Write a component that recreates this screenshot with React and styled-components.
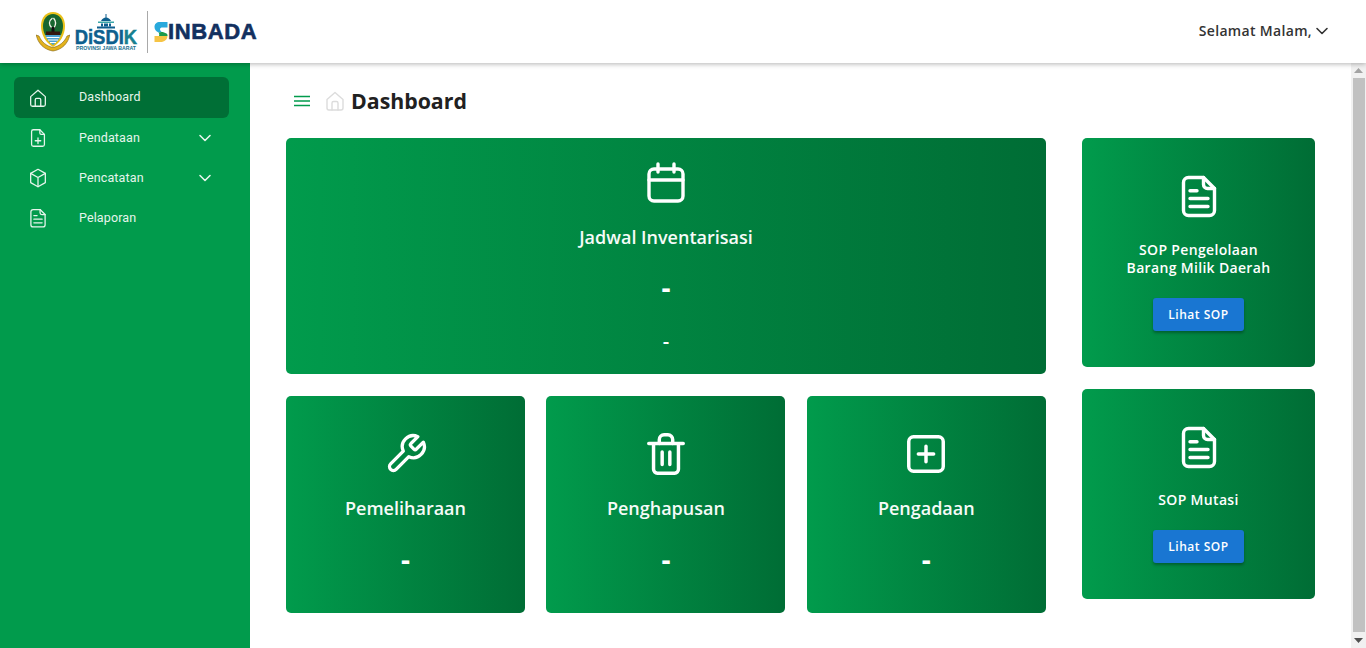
import React from "react";
import styled, { createGlobalStyle } from "styled-components";

const Global = createGlobalStyle`
  html, body { margin: 0; padding: 0; height: 100%; overflow: hidden; background: #fff; }
  #root { height: 100%; }
  * { box-sizing: border-box; }
`;

const Page = styled.div`
  display: flex; flex-direction: column; height: 648px; width: 100%;
  font-family: "Open Sans", sans-serif;
`;
const Header = styled.header`
  height: 63px; flex: none; background: #fff; display: flex; align-items: center;
  justify-content: space-between; padding: 0 36px 0 36px; position: relative; z-index: 2;
  box-shadow: 0 1px 5px rgba(0,0,0,.3);
`;
const Brand = styled.div`display: flex; align-items: center; height: 63px;`;
const Disdik = styled.div`
  display: flex; flex-direction: column; align-items: center; margin-left: 5px; width: 62px; padding-top: 2px;
`;
const DisdikName = styled.span`
  font: 700 20px/17px "Liberation Sans", sans-serif; color: #0e5f8e; white-space: nowrap;
  transform: scaleX(.92); -webkit-text-stroke: .5px #0e5f8e;
`;
const DisdikTail = styled.span`color: #17808f; -webkit-text-stroke: .5px #17808f;`;
const DisdikSub = styled.span`
  font: 700 5.2px/5px "Liberation Sans", sans-serif; color: #17708f; white-space: nowrap;
`;
const Divider = styled.div`width: 1px; height: 42px; background: #a9a9a9; margin: 0 6px 0 10px;`;
const SinbadaName = styled.span`
  font: 700 22px/24px "Liberation Sans", sans-serif; color: #12305f; letter-spacing: .6px;
  -webkit-text-stroke: .6px #12305f;
`;
const Greeting = styled.div`
  display: flex; align-items: center; gap: 2px; font-size: 14px; font-weight: 600; color: #333;
  letter-spacing: .33px; padding-bottom: 2px;
`;
const Body = styled.div`display: flex; flex: 1; min-height: 0;`;
const Sidebar = styled.nav`
  width: 250px; flex: none; background: #019b4c; padding: 14px 21px 0 14px; display: flex; flex-direction: column;
  font-family: Roboto, sans-serif;
`;
const NavItem = styled.div`
  height: ${p => (p.$active ? "41px" : "40px")}; border-radius: 6px; display: flex; align-items: center;
  padding-left: 13px; background: ${p => (p.$active ? "#006f36" : "transparent")}; color: #e6f5ec;
  font-size: 12.5px; letter-spacing: .13px;
`;
const NavLabel = styled.span`margin-left: 30px; flex: 1; padding-bottom: 2px;`;
const NavChevron = styled.span`display: flex; margin-right: 16px;`;
const Main = styled.main`flex: 1; min-width: 0; overflow: hidden; background: #fff;`;
const Content = styled.div`padding: 22px 36px 0;`;
const TitleRow = styled.div`display: flex; align-items: center; height: 32px; margin-bottom: 21px; padding-left: 8px;`;
const Title = styled.h1`margin: 0 0 0 4px; font-size: 21.3px; line-height: 32px; font-weight: 700; color: #212121;`;
const HomeWrap = styled.span`display: flex; margin-left: 13px;`;
const Hamburger = styled.span`display: flex;`;
const Grid = styled.div`display: grid; grid-template-columns: 760px 233px; column-gap: 36px; align-items: start;`;
const Column = styled.div`display: flex; flex-direction: column; gap: 22px;`;
const Row = styled.div`display: grid; grid-template-columns: 239px 239px 239px; column-gap: 21.4px;`;
const Card = styled.section`
  height: ${p => p.$h}px; border-radius: 5px; color: #fff; display: flex; flex-direction: column; align-items: center;
  background: linear-gradient(90deg, #019b4c 0%, #006d35 100%); padding-top: ${p => p.$pt}px;
`;
const IconSlot = styled.div`width: 48px; height: 48px; display: flex; align-items: center; justify-content: center; flex: none;`;
const CardTitle = styled.div`font-size: 18px; line-height: 26px; font-weight: 600; margin-top: ${p => p.$mt}px; color: #f6fbf8;`;
const BigDash = styled.div`font-size: 28px; line-height: 32px; font-weight: 700; margin-top: ${p => p.$mt}px;`;
const SmallDash = styled.div`font-size: 20px; line-height: 24px; font-weight: 600; margin-top: 26px;`;
const SopTitle = styled.div`
  font-size: 14px; line-height: 18px; font-weight: 600; text-align: center; margin-top: ${p => p.$mt}px; letter-spacing: .33px;
`;
const SopButton = styled.button`
  width: 91px; height: 33px; border: 0; border-radius: 3px; background: #1976d2; color: #fff; font-family: "Open Sans", sans-serif;
  font-size: 12px; font-weight: 600; letter-spacing: .52px; margin-top: ${p => p.$mt}px;
  box-shadow: 0 2px 3px rgba(0,0,0,.3);
`;
const Scrollbar = styled.div`
  width: 15px; flex: none; background: #f1f1f1; display: flex; flex-direction: column; align-items: center;
`;
const ScrollArrow = styled.div`
  height: 15px; flex: none; display: flex; align-items: center; justify-content: center;
`;
const ScrollTrack = styled.div`flex: 1; width: 100%; padding: 0 1px 1px 2px; display: flex;`;
const ScrollThumb = styled.div`flex: 1; background: #c1c1c1;`;

const Icon = ({ size = 24, sw = 2, color = "currentColor", children }) => (
  <svg width={size} height={size} viewBox="0 0 24 24" fill="none" stroke={color} strokeWidth={sw} strokeLinecap="round" strokeLinejoin="round">{children}</svg>
);
const HomeIcon = p => <Icon {...p}><path d="M4 10.5 12 3.5l8 7V19a2 2 0 0 1-2 2H6a2 2 0 0 1-2-2z" /><path d="M9 21v-7a1.500 1.500 0 0 1 1.500-1.500h3A1.500 1.500 0 0 1 15 14v7" /></Icon>;
const FilePlusIcon = p => <Icon {...p}><path d="M14 3H7a2 2 0 0 0-2 2v14a2 2 0 0 0 2 2h10a2 2 0 0 0 2-2V8z" /><path d="M14 3v3.500a1.500 1.500 0 0 0 1.500 1.500H19" /><path d="M12 12v6M9 15h6" /></Icon>;
const BoxIcon = p => <Icon {...p}><path d="M12 2.500 20 7v10l-8 4.500L4 17V7z" /><path d="M4 7l8 4.500L20 7M12 11.500v10" /></Icon>;
const FileTextIcon = p => <Icon {...p}><path d="M14.250 2.750H6.750a2.500 2.500 0 0 0-2.500 2.500v14a2.500 2.500 0 0 0 2.500 2.500h10.500a2.500 2.500 0 0 0 2.500-2.500V8.250z" /><path d="M14.250 2.750v3.500a2 2 0 0 0 2 2h3.500" /><path d="M7.500 9.350h3.500M7.500 13.250h9M7.500 17.250h9" /></Icon>;
const CalendarIcon = p => <Icon {...p}><rect x="3.500" y="5" width="17" height="16" rx="2.500" /><path d="M3.500 10.500h17M8 2.500v4M16 2.500v4" /></Icon>;
const WrenchIcon = p => <Icon {...p}><path d="M14.700 6.300a1 1 0 0 0 0 1.400l1.600 1.600a1 1 0 0 0 1.400 0l3.770-3.770a6 6 0 0 1-7.940 7.940l-6.910 6.910a2.120 2.120 0 0 1-3-3l6.910-6.910a6 6 0 0 1 7.940-7.940l-3.760 3.760z" /></Icon>;
const TrashIcon = p => <Icon {...p}><path d="M3 6.500h18M5.500 6.500V20a2 2 0 0 0 2 2h9a2 2 0 0 0 2-2V6.500" /><path d="M8.500 6.500V4.500a2.500 2.500 0 0 1 2.500-2.500h2a2.500 2.500 0 0 1 2.500 2.500v2M10 11v6.500M14 11v6.500" /></Icon>;
const SquarePlusIcon = p => <Icon {...p}><rect x="3" y="3" width="18" height="18" rx="2.500" /><path d="M12 8v8M8 12h8" /></Icon>;
const Chevron = ({ size = 16, color = "currentColor", sw = 1.6 }) => (
  <svg width={size} height={size} viewBox="0 0 16 16" fill="none" stroke={color} strokeWidth={sw} strokeLinecap="round" strokeLinejoin="round"><path d="M3 5.500 8 10.500l5-5" /></svg>
);

const Crest = () => (
  <svg width="34" height="40" viewBox="0 0 34 40">
    <path d="M17 0c7 0 12 5.500 12 14 0 9-5 17-12 21C10 31 5 23 5 14 5 5.500 10 0 17 0z" fill="#e9c11a" />
    <path d="M17 2c6 0 10 5 10 12 0 3-.7 6-2 9H9c-1.300-3-2-6-2-9C7 7 11 2 17 2z" fill="#17662f" />
    <path d="M16.500 6c-4 3-4 7-.5 10M17.500 6c2.500 3 3 6 .5 10" stroke="#f4f4e8" strokeWidth="1.300" fill="none" />
    <rect x="15.500" y="15" width="3" height="5" fill="#111" />
    <rect x="10" y="19.500" width="14" height="3.500" fill="#34170e" />
    <path d="M9 23h16c-1.500 4-4 7-8 10-4-3-6.500-6-8-10z" fill="#4da0d0" />
    <path d="M10.500 25.500h13M12 28h10M14 30.500h6" stroke="#fff" strokeWidth="1" />
    <path d="M0 23c1 2 1.500 5 3 7 3 5 8 8 14 9 6-1 11-4 14-9 1.500-2 2-5 3-7l-3 1c-2.500 6-7.500 10-14 11.500C10.500 34 5.500 30 3 24z" fill="#e3b21c" stroke="#7d5f0e" strokeWidth=".6" />
  </svg>
);
const Tower = () => (
  <svg width="24" height="15" viewBox="0 0 24 15">
    <path d="M12 0v4" stroke="#0e5f8e" strokeWidth="1" />
    <path d="M7 7c1-2 3-3.500 5-3.500S16 5 17 7z" fill="#0e5f8e" />
    <rect x="4" y="7.500" width="16" height="1.500" fill="#3aa6a8" />
    <path d="M7 9.500h2v3H7zM10 9.500h4v3h-4zM15 9.500h2v3h-2z" fill="#0e5f8e" />
    <rect x="3" y="12.500" width="18" height="2" fill="#0e5f8e" />
  </svg>
);
const SinbadaMark = () => (
  <svg width="14" height="22" viewBox="0 0 14 22">
    <path d="M13.500 1H6C2.500 1 .5 3 .5 6c0 2.500 1.500 4.500 4 5.500 1.500-.5 3-.5 4 0-1.500-1-2.500-2-2.500-3.200C6 7 7 6.500 8.500 6.500h5z" fill="#29a9dc" />
    <path d="M4.500 11.500c3-1 5.500-.5 8 1 1 .8 1.200 1.500 1 2.500H5c.5-1.500.2-2.700-.5-3.500z" fill="#1c9a4b" />
    <path d="M.5 15h13c-.2 3.500-3 6-7 6H.5z" fill="#f6c445" />
  </svg>
);

const menu = [
  { label: "Dashboard", icon: HomeIcon, active: true },
  { label: "Pendataan", icon: FilePlusIcon, more: true },
  { label: "Pencatatan", icon: BoxIcon, more: true },
  { label: "Pelaporan", icon: FileTextIcon },
];
const small = [
  { title: "Pemeliharaan", icon: WrenchIcon, size: 44 },
  { title: "Penghapusan", icon: TrashIcon, size: 46 },
  { title: "Pengadaan", icon: SquarePlusIcon, size: 46 },
];

export default function App() {
  return (
    <Page>
      <Global />
      <Header>
        <Brand>
          <Crest />
          <Disdik>
            <Tower />
            <DisdikName>DiSDI<DisdikTail>K</DisdikTail></DisdikName>
            <DisdikSub>PROVINSI JAWA BARAT</DisdikSub>
          </Disdik>
          <Divider />
          <SinbadaMark />
          <SinbadaName>INBADA</SinbadaName>
        </Brand>
        <Greeting>Selamat Malam,<Chevron size={16} color="#333" /></Greeting>
      </Header>
      <Body>
        <Sidebar>
          {menu.map(m => (
            <NavItem key={m.label} $active={m.active}>
              <m.icon size={22} sw={1.4} />
              <NavLabel>{m.label}</NavLabel>
              {m.more && <NavChevron><Chevron size={16} /></NavChevron>}
            </NavItem>
          ))}
        </Sidebar>
        <Main>
          <Content>
            <TitleRow>
              <Hamburger>
                <svg width="16" height="12" viewBox="0 0 16 12" stroke="#019b4c" strokeWidth="1.600"><path d="M0 1.500h16M0 6h16M0 10.500h16" /></svg>
              </Hamburger>
              <HomeWrap><HomeIcon size={24} sw={1.4} color="#dcdcdc" /></HomeWrap>
              <Title>Dashboard</Title>
            </TitleRow>
            <Grid>
              <Column>
                <Card $h={236} $pt={21}>
                  <IconSlot><CalendarIcon size={48} sw={1.7} /></IconSlot>
                  <CardTitle $mt={17}>Jadwal Inventarisasi</CardTitle>
                  <BigDash $mt={21}>-</BigDash>
                  <SmallDash>-</SmallDash>
                </Card>
                <Row>
                  {small.map(s => (
                    <Card key={s.title} $h={217} $pt={34}>
                      <IconSlot><s.icon size={s.size} sw={1.8} /></IconSlot>
                      <CardTitle $mt={17}>{s.title}</CardTitle>
                      <BigDash $mt={22}>-</BigDash>
                    </Card>
                  ))}
                </Row>
              </Column>
              <Column>
                <Card $h={229} $pt={34}>
                  <IconSlot><FileTextIcon size={48} sw={1.7} /></IconSlot>
                  <SopTitle $mt={21}>SOP Pengelolaan<br />Barang Milik Daerah</SopTitle>
                  <SopButton $mt={21}>Lihat SOP</SopButton>
                </Card>
                <Card $h={210} $pt={34}>
                  <IconSlot><FileTextIcon size={48} sw={1.7} /></IconSlot>
                  <SopTitle $mt={20}>SOP Mutasi</SopTitle>
                  <SopButton $mt={21}>Lihat SOP</SopButton>
                </Card>
              </Column>
            </Grid>
          </Content>
        </Main>
        <Scrollbar>
          <ScrollArrow>
            <svg width="9" height="5" viewBox="0 0 9 5"><path d="M4.500 0 9 5H0z" fill="#a3a3a3" /></svg>
          </ScrollArrow>
          <ScrollTrack><ScrollThumb /></ScrollTrack>
          <ScrollArrow>
            <svg width="9" height="5" viewBox="0 0 9 5"><path d="M0 0h9L4.500 5z" fill="#505050" /></svg>
          </ScrollArrow>
        </Scrollbar>
      </Body>
    </Page>
  );
}
